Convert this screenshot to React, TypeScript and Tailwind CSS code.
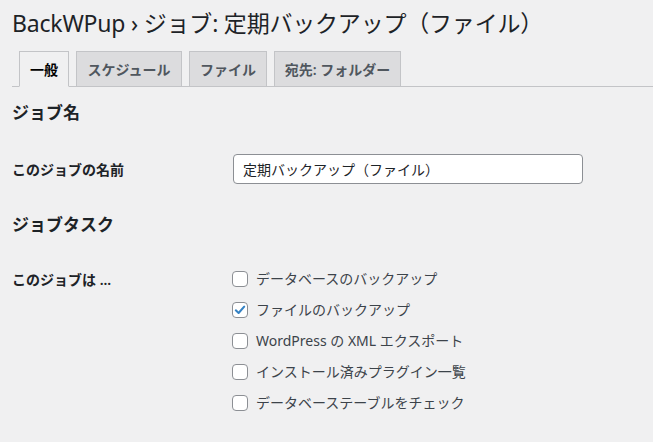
import React from "react"

const font = { fontFamily: '"Noto Sans", "Noto Sans CJK JP", sans-serif' }

const tabs = [
  { label: "一般", w: "w-[50px]", active: true },
  { label: "スケジュール", w: "w-[106px]" },
  { label: "ファイル", w: "w-[78px]" },
  { label: "宛先: フォルダー", w: "w-[127px]" },
]

const tasks = [
  { label: "データベースのバックアップ", checked: false },
  { label: "ファイルのバックアップ", checked: true },
  { label: "WordPress の XML エクスポート", checked: false },
  { label: "インストール済みプラグイン一覧", checked: false },
  { label: "データベーステーブルをチェック", checked: false },
]

function Checkbox({ checked }: { checked: boolean }) {
  return (
    <span className="flex h-4 w-4 shrink-0 items-center justify-center rounded-[4px] border border-[#8c8f94] bg-white">
      {checked && (
        <svg viewBox="0 0 16 16" className="h-[14px] w-[14px]">
          <path d="M3.2 8.4 L6.4 11.4 L12.8 4.2" fill="none" stroke="#3582c4" strokeWidth="2.4" strokeLinecap="round" strokeLinejoin="round" />
        </svg>
      )}
    </span>
  )
}

export default function App() {
  return (
    <div className="h-[442px] w-[653px] overflow-hidden bg-[#f0f0f1] pl-[12px] text-[#1d2327]" style={font}>
      <h1 className="pt-[8px] pb-[4px] text-[23px] leading-[30px] font-normal tracking-[-0.2px]">
        BackWPup › ジョブ: 定期バックアップ（ファイル）
      </h1>

      {/* Tabs */}
      <div className="mt-[9px] flex items-end border-b border-[#c3c4c7]">
        {tabs.map((t) => (
          <div
            key={t.label}
            className={
              t.active
                ? `ml-[7px] -mb-px flex h-[36px] ${t.w} items-center justify-center border border-[#c3c4c7] border-b-[#f0f0f1] bg-[#f0f0f1] text-[14px] font-semibold text-black`
                : `ml-[7px] flex h-[35px] ${t.w} items-center justify-center border border-b-0 border-[#c3c4c7] bg-[#dcdcde] text-[14px] font-semibold text-[#50575e]`
            }
          >
            {t.label}
          </div>
        ))}
      </div>

      <h3 className="mt-[15px] text-[17px] leading-[22px] font-bold">ジョブ名</h3>

      <div className="mt-[30px] flex items-center">
        <div className="w-[221px] text-[14px] font-semibold">このジョブの名前</div>
        <div className="flex h-[30px] w-[350px] items-center rounded-[4px] border border-[#8c8f94] bg-white px-[9px] text-[14px]">
          定期バックアップ（ファイル）
        </div>
      </div>

      <h3 className="mt-[30px] text-[17px] leading-[22px] font-bold">ジョブタスク</h3>

      <div className="mt-[35px] flex">
        <div className="w-[220px] pt-[1px] text-[14px] leading-[16px] font-semibold">このジョブは ...</div>
        <div className="flex flex-col gap-[15px]">
          {tasks.map((t) => (
            <label key={t.label} className="flex items-center gap-[8px] text-[14px] leading-[16px] text-[#3c434a]">
              <Checkbox checked={t.checked} />
              <span>{t.label}</span>
            </label>
          ))}
        </div>
      </div>
    </div>
  )
}
